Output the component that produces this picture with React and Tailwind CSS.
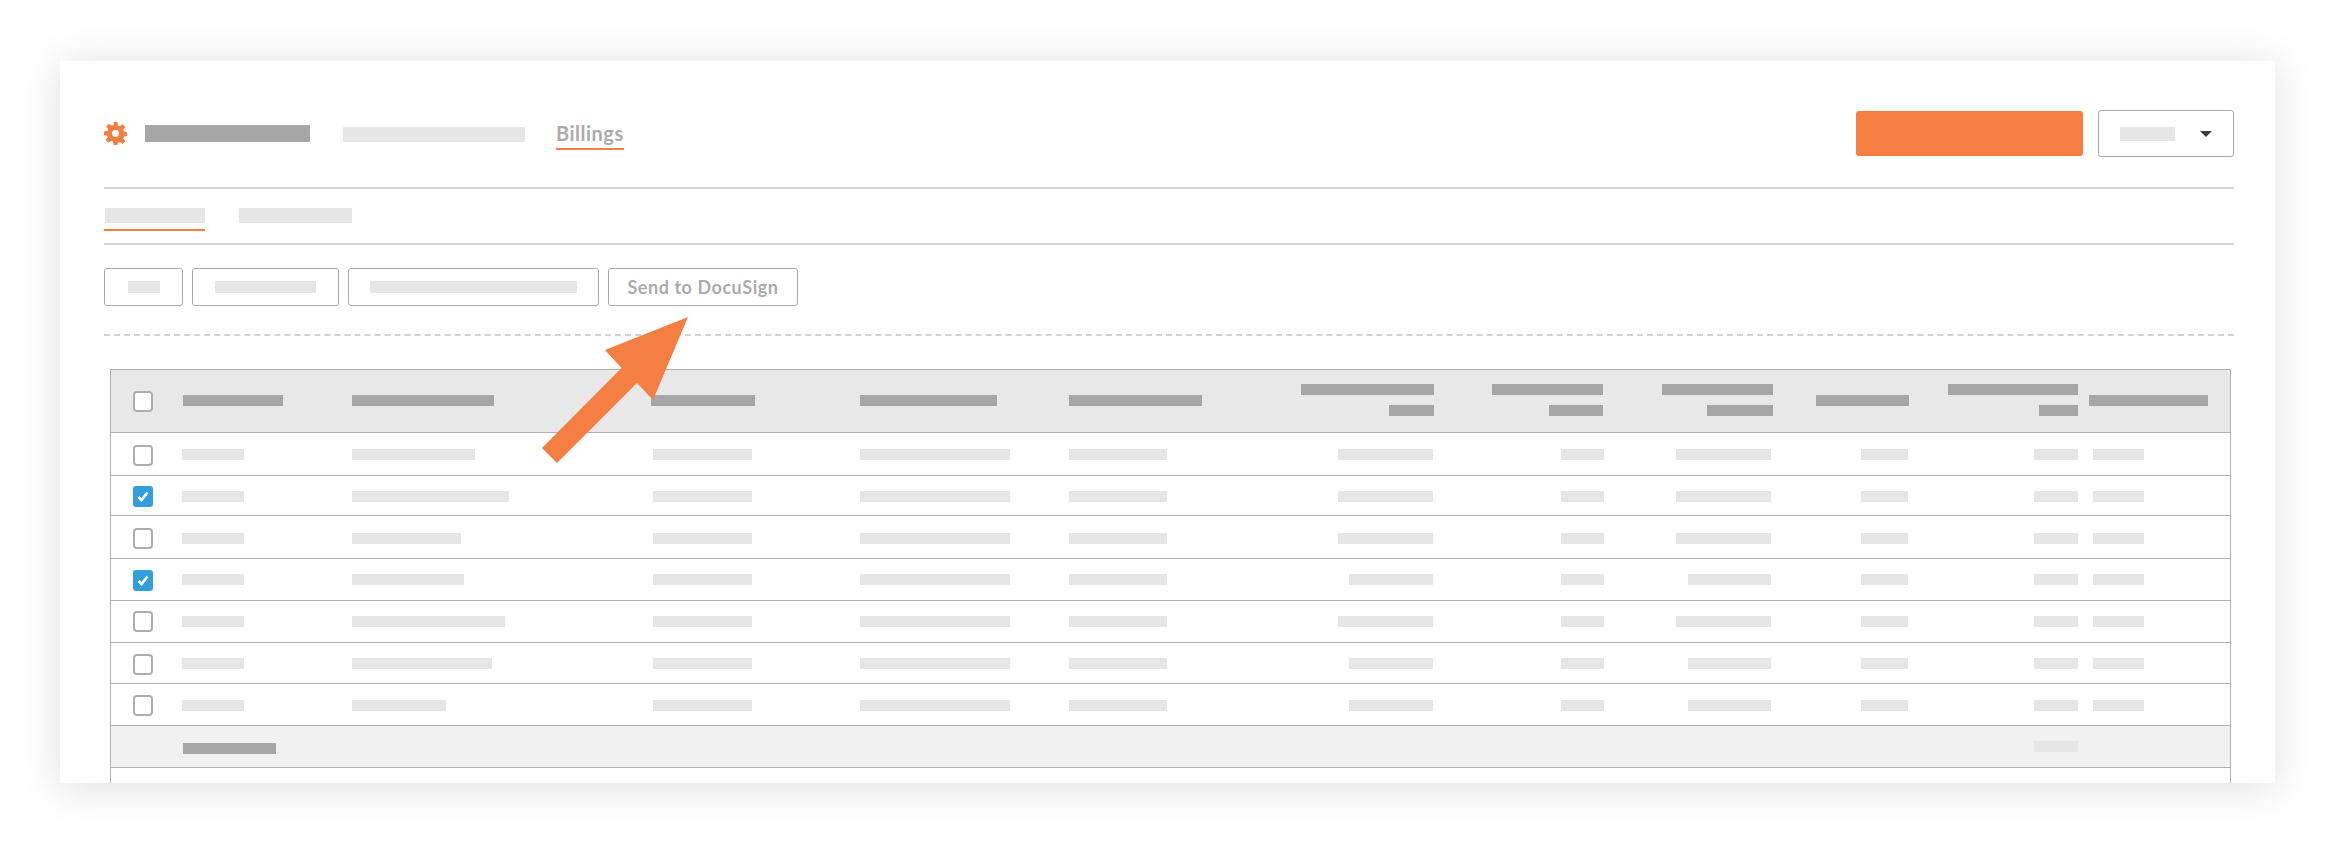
import React from "react";

const COLS = "grid grid-cols-[71px_170px_299px_209px_209px_206px_160px_170px_170px_135px_170px_1fr] items-center";

const Light = ({ className = "" }) => <div className={`h-[11px] bg-[#e6e6e6] ${className}`} />;
const Dark = ({ className = "" }) => <div className={`h-[11px] bg-[#a6a6a6] ${className}`} />;

const Check = ({ checked, className = "" }) =>
  checked ? (
    <div className={`ml-[22px] flex h-[21px] w-[20px] items-center justify-center rounded-[3px] bg-[#329fdc] ${className}`}>
      <svg width="12" height="11" viewBox="0 0 12 11" fill="none">
        <path d="M1.5 6 L4.5 9 L10.5 1.5" stroke="#ffffff" strokeWidth="2.6" />
      </svg>
    </div>
  ) : (
    <div className={`ml-[22px] h-[21px] w-[20px] rounded-[4px] border-2 border-[#adadad] bg-white ${className}`} />
  );

const Stack = ({ a, b, className = "" }) => (
  <div className={`flex flex-col items-end gap-[10px] justify-self-end ${className}`}>
    <Dark className={a} />
    <Dark className={b} />
  </div>
);

const Gear = () => (
  <svg width="23" height="23" viewBox="0 0 24 24" fill="#f57e42">
    <path
      fillRule="evenodd"
      d="M10 0h4l.6 3.6 1.9.8 3-2.1 2.8 2.8-2.1 3 .8 1.9 3.6.6v4l-3.6.6-.8 1.9 2.1 3-2.8 2.8-3-2.1-1.9.8L14 24h-4l-.6-3.6-1.9-.8-3 2.1-2.8-2.8 2.1-3-.8-1.9L0 14v-4l3.6-.6.8-1.9-2.1-3 2.8-2.8 3 2.1 1.9-.8L10 0zm2 8.4a3.6 3.6 0 1 0 0 7.2 3.6 3.6 0 0 0 0-7.2z"
    />
  </svg>
);

const rows = [
  { h: "h-[43px] pt-[1px]", c: "mt-[1px]", on: false, name: "w-[123px]", a: "w-[95px]", b: "w-[95px]" },
  { h: "h-[40px] pt-[2px]", c: "", on: true, name: "w-[157px]", a: "w-[95px]", b: "w-[95px]" },
  { h: "h-[43px] pt-[2px]", c: "", on: false, name: "w-[109px]", a: "w-[95px]", b: "w-[95px]" },
  { h: "h-[42px]", c: "mt-[2px]", on: true, name: "w-[112px]", a: "w-[84px]", b: "w-[83px]" },
  { h: "h-[42px]", c: "", on: false, name: "w-[153px]", a: "w-[95px]", b: "w-[95px]" },
  { h: "h-[41px] pt-[1px]", c: "mt-[1px]", on: false, name: "w-[140px]", a: "w-[84px]", b: "w-[83px]" },
  { h: "h-[42px] pt-[2px]", c: "", on: false, name: "w-[94px]", a: "w-[84px]", b: "w-[83px]" },
];

export default function App() {
  return (
    <div className="relative h-[843px] w-[2335px] overflow-hidden bg-white pl-[60px] pt-[61px] font-['Lato',sans-serif]">
      <div className="h-[722px] w-[2215px] overflow-hidden bg-white pl-[44px] pr-[41px] pt-[49px] shadow-[0_4px_40px_rgba(0,0,0,0.13)]">
        <div className="flex h-[47px] items-center justify-between">
          <div className="flex items-center">
            <Gear />
            <div className="ml-[18px] h-[17px] w-[165px] bg-[#a6a6a6]" />
            <div className="ml-[33px] mt-[2px] h-[15px] w-[182px] bg-[#e6e6e6]" />
            <div className="ml-[31px] mt-[3px] flex flex-col">
              <span className="text-[20px] font-bold leading-[24px] tracking-[0.5px] text-[#ababab]">Billings</span>
              <div className="mt-[3px] h-[2px] bg-[#f57e42]" />
            </div>
          </div>
          <div className="flex items-center gap-[15px]">
            <div className="h-[45px] w-[227px] rounded-[3px] bg-[#f57e42]" />
            <div className="flex h-[47px] w-[136px] items-center rounded-[3px] border border-[#aaaaaa] pl-[21px]">
              <div className="h-[14px] w-[55px] bg-[#e6e6e6]" />
              <svg className="ml-[25px]" width="12" height="6" viewBox="0 0 12 6">
                <polygon points="0,0 12,0 6,6" fill="#3c3c3c" />
              </svg>
            </div>
          </div>
        </div>

        <div className="mt-[30px] h-[2px] bg-[#d6d6d6]" />

        <div className="flex pt-[19px]">
          <div className="flex w-[101px] flex-col items-end">
            <div className="h-[15px] w-[100px] bg-[#e6e6e6]" />
            <div className="mt-[6px] h-[2px] w-full bg-[#f57e42]" />
          </div>
          <div className="ml-[34px] h-[15px] w-[113px] bg-[#e6e6e6]" />
        </div>

        <div className="mt-[12px] h-[2px] bg-[#d6d6d6]" />

        <div className="mt-[23px] flex gap-[9px]">
          <div className="flex h-[38px] w-[79px] items-center justify-center rounded-[3px] border border-[#aaaaaa]">
            <div className="h-[12px] w-[32px] bg-[#e6e6e6]" />
          </div>
          <div className="flex h-[38px] w-[147px] items-center justify-center rounded-[3px] border border-[#aaaaaa]">
            <div className="h-[12px] w-[101px] bg-[#e6e6e6]" />
          </div>
          <div className="flex h-[38px] w-[251px] items-center justify-center rounded-[3px] border border-[#aaaaaa]">
            <div className="h-[12px] w-[207px] bg-[#e6e6e6]" />
          </div>
          <div className="flex h-[38px] w-[190px] items-center justify-center rounded-[3px] border border-[#aaaaaa]">
            <span className="text-[18px] font-bold tracking-[0.55px] text-[#ababab]">Send to DocuSign</span>
          </div>
        </div>

        <div className="mt-[28px] border-t-2 border-dashed border-[#d2d2d2]" />

        <div className="ml-[6px] mt-[33px] w-[2121px] border-x border-t border-[#b0b0b0]">
          <div className={`${COLS} h-[63px] border-b border-[#b0b0b0] bg-[#e8e8e8]`}>
            <Check />
            <Dark className="ml-px -mt-[2px] w-[100px]" />
            <Dark className="-mt-[2px] w-[142px]" />
            <Dark className="-mt-[2px] w-[104px]" />
            <Dark className="-mt-[2px] w-[137px]" />
            <Dark className="-mt-[2px] w-[133px]" />
            <Stack a="w-[133px]" b="w-[45px]" className="mr-px -mt-[2px]" />
            <Stack a="w-[111px]" b="w-[54px]" className="mr-[2px] -mt-[2px]" />
            <Stack a="w-[111px]" b="w-[66px]" className="mr-[2px] -mt-[2px]" />
            <Dark className="mr-px -mt-[2px] w-[93px] justify-self-end" />
            <Stack a="w-[130px]" b="w-[39px]" className="mr-[2px] -mt-[2px]" />
            <Dark className="ml-[9px] -mt-[2px] w-[119px]" />
          </div>

          {rows.map((r, i) => (
            <div key={i} className={`${COLS} ${r.h} border-b border-[#b0b0b0]`}>
              <Check checked={r.on} className={r.c} />
              <Light className="w-[62px]" />
              <Light className={r.name} />
              <Light className="ml-[2px] w-[99px]" />
              <Light className="w-[150px]" />
              <Light className="w-[98px]" />
              <Light className={`mr-[2px] justify-self-end ${r.a}`} />
              <Light className="mr-px w-[43px] justify-self-end" />
              <Light className={`mr-[4px] justify-self-end ${r.b}`} />
              <Light className="mr-[2px] w-[47px] justify-self-end" />
              <Light className="mr-[2px] w-[44px] justify-self-end" />
              <Light className="ml-[13px] w-[51px]" />
            </div>
          ))}

          <div className={`${COLS} h-[42px] border-b border-[#b0b0b0] bg-[#f1f1f1]`}>
            <Dark className="col-start-2 ml-px mt-[4px] w-[93px]" />
            <Light className="col-start-11 mr-[2px] w-[44px] justify-self-end" />
          </div>
          <div className="h-[60px]" />
        </div>
      </div>

      <svg className="pointer-events-none absolute left-[542px] top-[317px]" width="146" height="146" viewBox="0 0 146 146">
        <polygon points="146,0 63,33 79.5,51 0,131 15,146 95,66 111,83" fill="#f57e42" />
      </svg>
    </div>
  );
}
